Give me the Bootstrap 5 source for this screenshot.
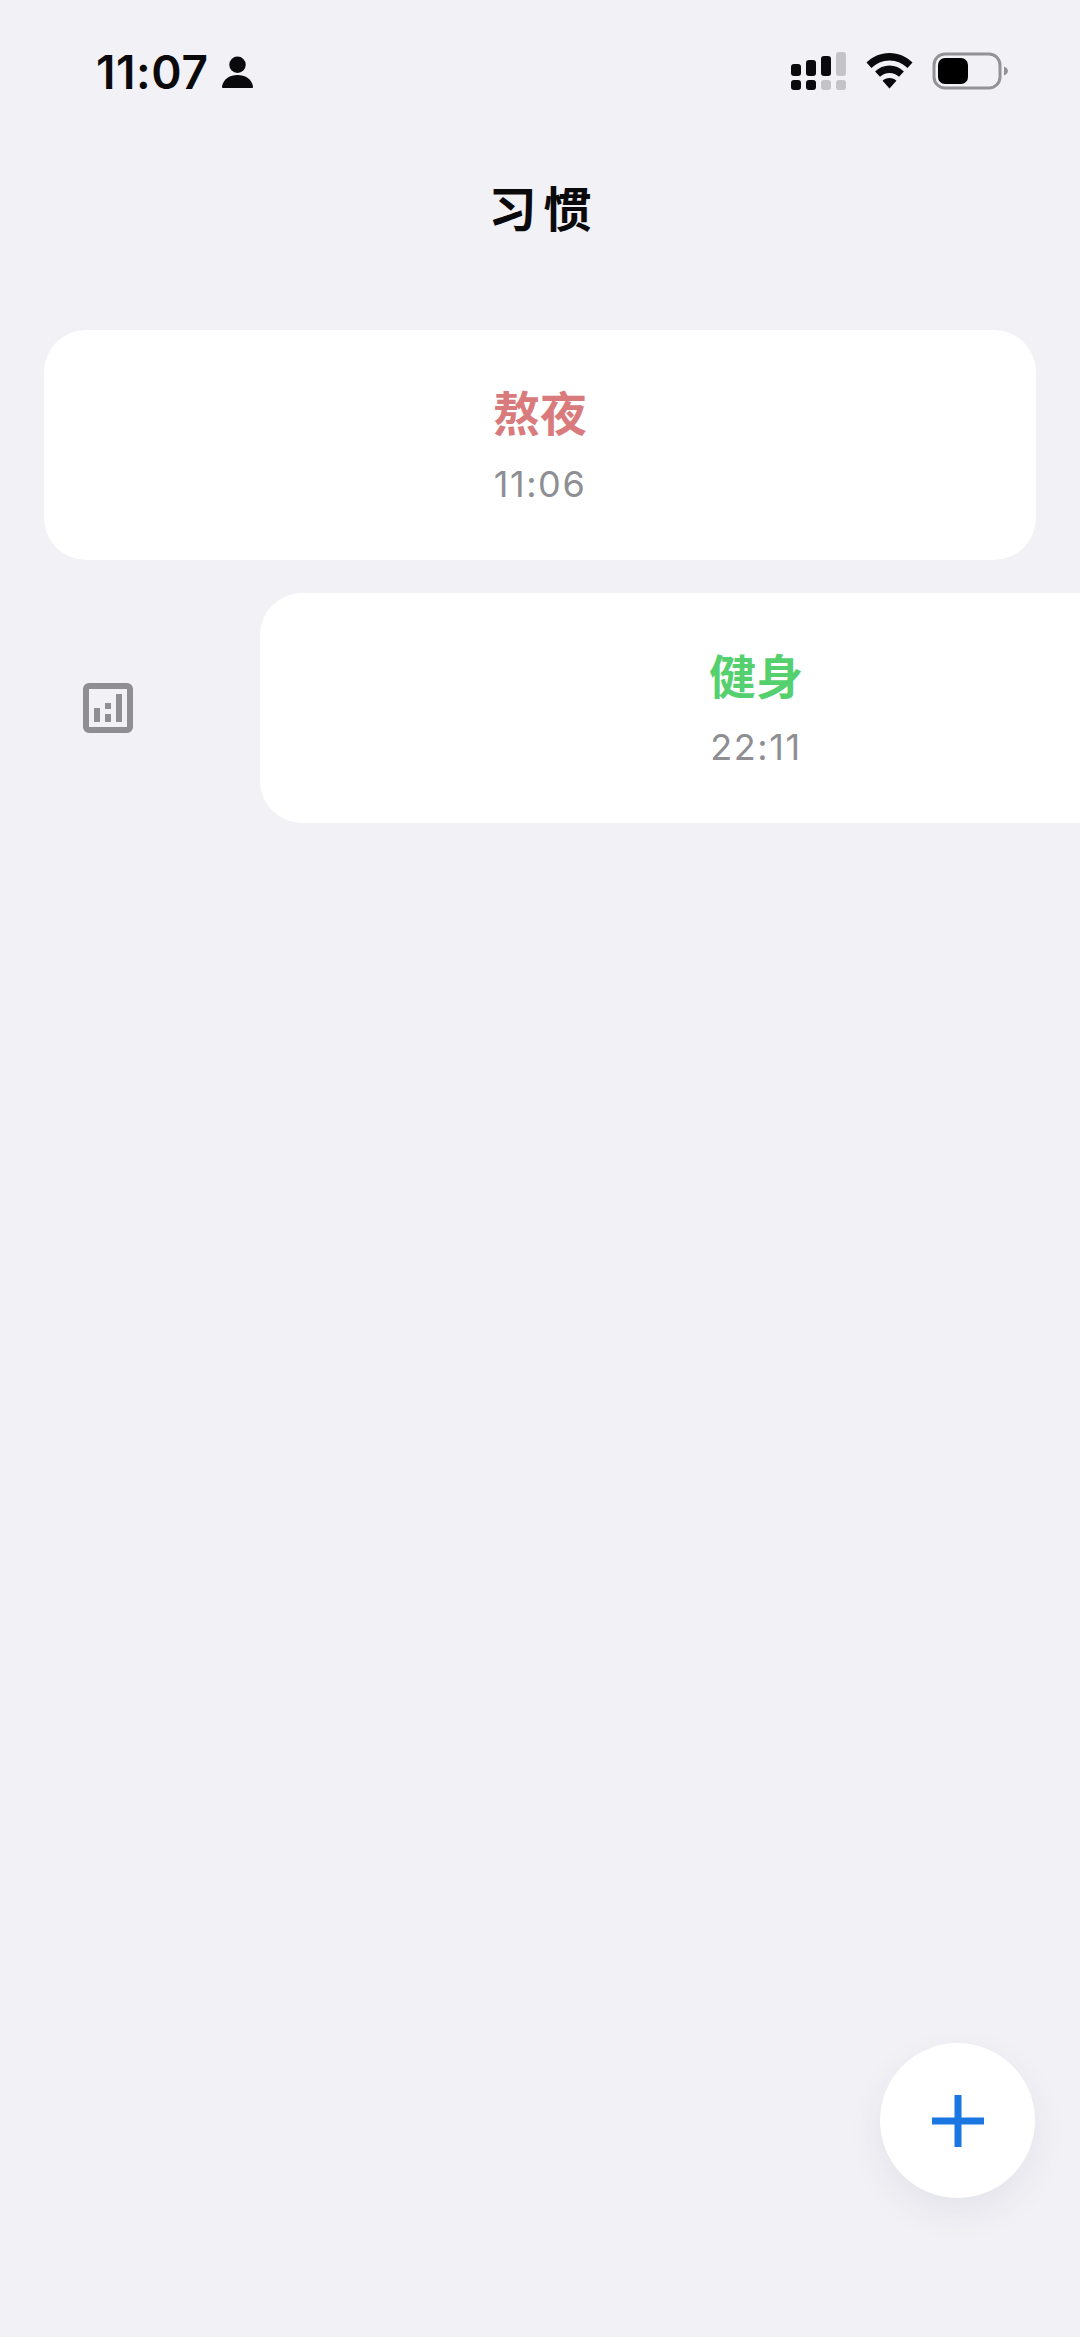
<!DOCTYPE html>
<html lang="zh-CN">
  <head>
    <meta charset="UTF-8" />
    <meta name="viewport" content="width=device-width, initial-scale=1.0" />
    <title>习惯</title>
    <link
      rel="stylesheet"
      href="https://cdn.jsdelivr.net/npm/bootstrap@5.3.2/dist/css/bootstrap.min.css"
    />
    <style>
      html,
      body {
        height: 100%;
      }
      body {
        background: #f1f1f6;
        font-family: Inter, "Noto Sans CJK SC", sans-serif;
      }
      .app-screen {
        height: 2337px;
        overflow: hidden;
      }
      .status-row {
        height: 140px;
        padding: 46px 72px 0 96px;
      }
      .clock {
        font-size: 46px;
        line-height: 52px;
        font-weight: 600;
        letter-spacing: 0.6px;
        color: #0a0a0c;
      }
      .person-icon {
        margin-left: -3px;
      }
      .status-icons {
        gap: 19px;
        height: 50px;
      }
      .page-title {
        height: 130px;
        margin: 0;
        font-family: "Noto Sans CJK SC", sans-serif;
        font-size: 48px;
        line-height: 132px;
        font-weight: 700;
        letter-spacing: 7px;
        text-indent: 7px;
        color: #0a0a0c;
      }
      .habit-list {
        padding: 60px 44px 0;
        gap: 33px;
      }
      .habit-card {
        width: 992px;
        height: 230px;
        flex-shrink: 0;
        padding-bottom: 4px;
        border: 0;
        border-radius: 42px;
      }
      .swipe-row {
        margin-right: -216px;
      }
      .swipe-action {
        width: 216px;
        padding-left: 39px;
      }
      .habit-name {
        font-family: "Noto Sans CJK SC", sans-serif;
        font-size: 47px;
        line-height: 60px;
        font-weight: 700;
      }
      .habit-time {
        font-size: 36px;
        line-height: 44px;
        margin-top: 21px;
        letter-spacing: 1.6px;
        color: #8e8e93;
      }
      .tone-red {
        color: #d97a7c;
      }
      .tone-green {
        color: #55d06f;
      }
      .add-btn {
        right: 45px;
        top: 2043px;
        width: 155px;
        height: 155px;
        padding: 0;
        border: 0;
        box-shadow: 0 14px 36px rgba(60, 60, 90, 0.07);
      }
      .add-btn:hover {
        background: #fff;
      }
    </style>
  </head>
  <body>
    <div class="app-screen position-relative">
      <!-- status bar -->
      <div class="status-row d-flex justify-content-between align-items-start">
        <div class="d-flex align-items-center gap-3">
          <span class="clock">11:07</span>
          <svg class="person-icon" width="31" height="33" viewBox="0 0 32 34">
            <circle cx="16" cy="9" r="8.500" fill="#0a0a0c" />
            <path d="M1 33c-1.200 0-1-1.600-.8-2.600C2 23.500 8 19.500 16 19.500s14 4 15.800 10.900c.2 1 .4 2.600-.8 2.600z" fill="#0a0a0c" />
          </svg>
        </div>
        <div class="status-icons d-flex align-items-center">
          <svg width="56" height="40" viewBox="0 0 56 40">
            <g fill="#0a0a0c">
              <rect x="0" y="13" width="10" height="12" rx="3" />
              <rect x="15" y="9" width="10" height="16" rx="3" />
              <rect x="30" y="5" width="10" height="20" rx="3" />
              <rect x="0" y="29" width="10" height="10" rx="3" />
              <rect x="15" y="29" width="10" height="10" rx="3" />
            </g>
            <g fill="#c4c4c7">
              <rect x="45" y="1" width="10" height="24" rx="3" />
              <rect x="30" y="29" width="10" height="10" rx="3" />
              <rect x="45" y="29" width="10" height="10" rx="3" />
            </g>
          </svg>
          <svg width="47" height="36" viewBox="0 0 47 36">
            <path d="M23.500 0C14.500 0 6.500 3.600.500 9.500l5 5.600C10 10.500 16.500 7.500 23.500 7.500s13.500 3 18 7.600l5-5.600C40.500 3.600 32.500 0 23.500 0z" fill="#0a0a0c" />
            <path d="M23.500 12.500c-5.500 0-10.500 2.200-14.400 5.900l4.900 5.400c2.500-2.400 5.800-3.800 9.500-3.800s7 1.400 9.500 3.800l4.900-5.400c-3.900-3.700-8.900-5.900-14.400-5.900z" fill="#0a0a0c" />
            <path d="M23.500 25c-2.700 0-5.100 1-6.900 2.800l6.900 7.700 6.900-7.700C28.600 26 26.200 25 23.500 25z" fill="#0a0a0c" />
          </svg>
          <svg width="76" height="38" viewBox="0 0 76 38">
            <rect x="2" y="2" width="66" height="34" rx="11" fill="none" stroke="#939396" stroke-width="3" />
            <rect x="6" y="6" width="30" height="26" rx="7" fill="#000" />
            <path d="M72 14.500c2 .8 4 2.500 4 4.500s-2 3.700-4 4.500z" fill="#939396" />
          </svg>
        </div>
      </div>

      <h1 class="page-title text-center">习惯</h1>

      <!-- habit rows -->
      <div class="habit-list d-flex flex-column">
        <div class="card habit-card align-items-center justify-content-center">
          <div class="habit-name tone-red">熬夜</div>
          <div class="habit-time">11:06</div>
        </div>
        <div class="swipe-row d-flex">
          <div class="swipe-action d-flex align-items-center">
            <svg width="50" height="50" viewBox="0 0 50 50">
              <rect x="3" y="3" width="44" height="44" rx="3" fill="none" stroke="#8e8e93" stroke-width="6" />
              <g fill="#8e8e93">
                <rect x="11" y="25" width="6" height="14" />
                <rect x="22" y="20" width="6" height="6" />
                <rect x="22" y="31" width="6" height="8" />
                <rect x="33" y="11" width="6" height="28" />
              </g>
            </svg>
          </div>
          <div class="card habit-card align-items-center justify-content-center">
            <div class="habit-name tone-green">健身</div>
            <div class="habit-time">22:11</div>
          </div>
        </div>
      </div>

      <button class="add-btn btn btn-light bg-white rounded-circle position-absolute d-flex align-items-center justify-content-center" type="button" aria-label="添加">
        <svg width="52" height="52" viewBox="0 0 52 52">
          <path d="M22.500 0h7v22.500H52v7H29.500V52h-7V29.500H0v-7h22.500z" fill="#1a77e2" />
        </svg>
      </button>
    </div>

    <script src="https://cdn.jsdelivr.net/npm/bootstrap@5.3.2/dist/js/bootstrap.bundle.min.js"></script>
  </body>
</html>
